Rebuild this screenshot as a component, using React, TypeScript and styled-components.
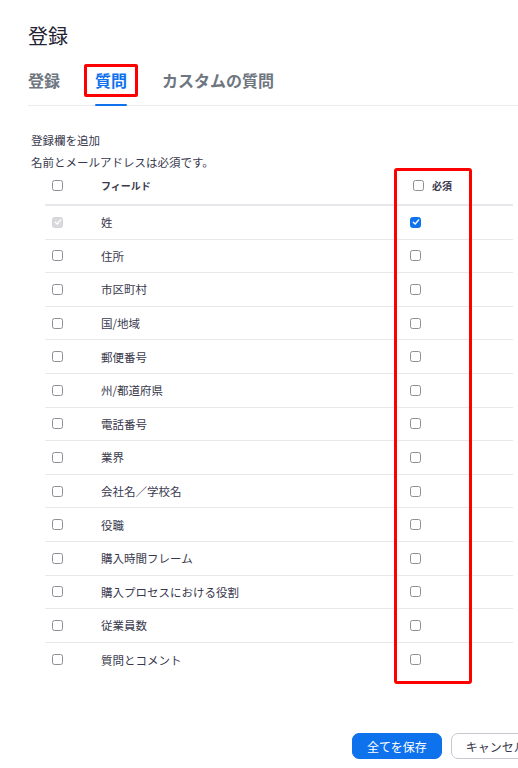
import styled, { createGlobalStyle } from "styled-components"
import { type FC } from "react"

const GlobalStyle = createGlobalStyle`
  html, body {
    margin: 0;
    padding: 0;
    background: #ffffff;
    overflow: hidden;
  }
  body {
    font-family: "Noto Sans CJK JP", "Noto Sans", sans-serif;
    color: #232333;
  }
`

const Page = styled.div`
  width: 518px;
  height: 768px;
  padding: 22px 0 0 28px;
  box-sizing: border-box;
  display: flex;
  flex-direction: column;
`

const Title = styled.h1`
  margin: 0;
  font-size: 20px;
  line-height: 28px;
  font-weight: 400;
  color: #232333;
`

const TabBar = styled.div`
  display: flex;
  gap: 35px;
  margin-top: 15px;
  border-bottom: 1px solid #ececf0;
  height: 41px;
  box-sizing: border-box;
`

const Tab = styled.div<{ $active?: boolean; $marked?: boolean }>`
  position: relative;
  height: 100%;
  display: flex;
  align-items: flex-start;
  font-size: 16px;
  line-height: 20px;
  padding-top: 5px;
  box-sizing: border-box;
  font-weight: 700;
  color: ${(p) => (p.$active ? "#0e72ed" : "#6e7680")};

  &::after {
    content: "";
    display: ${(p) => (p.$active ? "block" : "none")};
    position: absolute;
    left: 0;
    right: 0;
    bottom: -1px;
    height: 2px;
    background: #0e72ed;
    border-radius: 1px;
  }

  &::before {
    content: "";
    display: ${(p) => (p.$marked ? "block" : "none")};
    position: absolute;
    left: -11px;
    right: -11px;
    top: -1px;
    height: 33px;
    border: 3px solid #ff0000;
    border-radius: 2px;
    box-sizing: border-box;
  }
`

const Intro = styled.div`
  margin-top: 23px;
  padding-left: 3px;
  font-size: 11.5px;
  line-height: 22px;
  color: #39394d;
`

const Table = styled.div`
  position: relative;
  margin-left: 17px;
  margin-right: 5px;
  margin-top: -3px;
`

const HeaderRow = styled.div`
  display: flex;
  align-items: center;
  height: 36px;
  padding-bottom: 4px;
  border-bottom: 2px solid #e8e8ec;
  box-sizing: border-box;
`

const Row = styled.div<{ $last?: boolean }>`
  display: flex;
  align-items: center;
  height: 33.6px;
  box-sizing: border-box;
  border-bottom: ${(p) => (p.$last ? "none" : "1px solid #e8e8ec")};
`

const CheckCell = styled.div`
  width: 56px;
  padding-left: 7px;
  box-sizing: border-box;
  display: flex;
  align-items: center;
`

const LabelCell = styled.div<{ $head?: boolean }>`
  width: 309px;
  font-size: ${(p) => (p.$head ? "10px" : "11.5px")};
  font-weight: ${(p) => (p.$head ? 700 : 400)};
  color: #39394d;
`

const RequiredCell = styled.div<{ $head?: boolean }>`
  display: flex;
  align-items: center;
  gap: 8px;
  padding-left: ${(p) => (p.$head ? "3px" : "0")};
  font-size: 10px;
  font-weight: 700;
  color: #39394d;
`

const Box = styled.span<{ $state?: "off" | "on" | "locked" }>`
  width: 11px;
  height: 11px;
  border-radius: 2.5px;
  box-sizing: border-box;
  display: inline-flex;
  align-items: center;
  justify-content: center;
  border: 1px solid
    ${(p) =>
      p.$state === "on" ? "#0e72ed" : p.$state === "locked" ? "#d4d4d8" : "#8e8e96"};
  background: ${(p) =>
    p.$state === "on" ? "#0e72ed" : p.$state === "locked" ? "#d9d9dd" : "#ffffff"};

  svg {
    width: 8px;
    height: 8px;
  }
`

const RequiredMark = styled.div`
  position: absolute;
  left: 349px;
  top: -2px;
  width: 78px;
  height: 516px;
  border: 3.5px solid #ff0000;
  border-radius: 3px;
  box-sizing: border-box;
  pointer-events: none;
`

const Footer = styled.div`
  margin-top: auto;
  margin-bottom: 9px;
  display: flex;
  gap: 9px;
  padding-left: 324px;
`

const Button = styled.button<{ $primary?: boolean }>`
  flex: none;
  height: 26px;
  padding: 0 14px;
  border-radius: 7px;
  font-family: inherit;
  font-size: 12px;
  white-space: nowrap;
  border: 1px solid ${(p) => (p.$primary ? "#0e72ed" : "#c8c8d0")};
  background: ${(p) => (p.$primary ? "#0e72ed" : "#ffffff")};
  color: ${(p) => (p.$primary ? "#ffffff" : "#39394d")};
`

const Check: FC<{ state: "off" | "on" | "locked" }> = ({ state }) => (
  <Box $state={state}>
    {state !== "off" && (
      <svg viewBox="0 0 8 8" fill="none">
        <path
          d="M1.3 4.2 L3.2 6 L6.7 1.9"
          stroke="#ffffff"
          strokeWidth="1.4"
          strokeLinecap="round"
          strokeLinejoin="round"
        />
      </svg>
    )}
  </Box>
)

const fields = [
  "姓",
  "住所",
  "市区町村",
  "国/地域",
  "郵便番号",
  "州/都道府県",
  "電話番号",
  "業界",
  "会社名／学校名",
  "役職",
  "購入時間フレーム",
  "購入プロセスにおける役割",
  "従業員数",
  "質問とコメント",
]

const App: FC = () => {
  return (
    <>
      <GlobalStyle />
      <Page>
        <Title>登録</Title>
        <TabBar>
          <Tab>登録</Tab>
          <Tab $active $marked>質問</Tab>
          <Tab>カスタムの質問</Tab>
        </TabBar>
        <Intro>
          <div>登録欄を追加</div>
          <div>名前とメールアドレスは必須です。</div>
        </Intro>
        <Table>
          <HeaderRow>
            <CheckCell>
              <Check state="off" />
            </CheckCell>
            <LabelCell $head>フィールド</LabelCell>
            <RequiredCell $head>
              <Check state="off" />
              必須
            </RequiredCell>
          </HeaderRow>
          {fields.map((name, i) => (
            <Row key={name} $last={i === fields.length - 1}>
              <CheckCell>
                <Check state={i === 0 ? "locked" : "off"} />
              </CheckCell>
              <LabelCell>{name}</LabelCell>
              <RequiredCell>
                <Check state={i === 0 ? "on" : "off"} />
              </RequiredCell>
            </Row>
          ))}
          <RequiredMark />
        </Table>
        <Footer>
          <Button $primary>全てを保存</Button>
          <Button>キャンセル</Button>
        </Footer>
      </Page>
    </>
  )
}

export default App
